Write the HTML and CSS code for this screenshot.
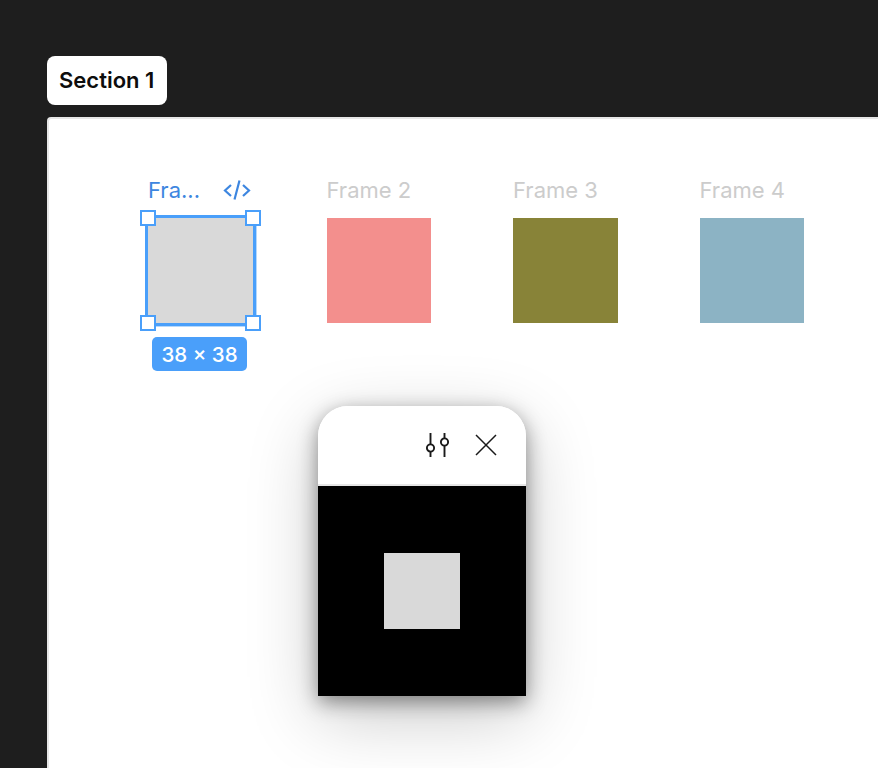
FILE: index.html
```html
<!DOCTYPE html>
<html lang="en">
<head>
    <meta charset="UTF-8">
    <title>Section 1</title>
    <link rel="stylesheet" href="styles.css">
</head>
<body>

    <!-- Section label -->
    <div class="section-label">Section 1</div>

    <!-- Section canvas -->
    <div class="section">
        <div class="frames">
            <div class="frame frame-selected">
                <div class="frame-title">
                    <span>Fra...</span>
                    <svg class="code-icon" width="28" height="22" viewBox="0 0 28 22" fill="none" stroke="#3d86e0" stroke-width="2.200">
                        <path d="M8 6 2 11.500 8 17M20 6l6 5.500-6 5.500M16.500 1.500l-5 19"/>
                    </svg>
                </div>
                <div class="frame-box selected-box">
                    <span class="handle handle-tl"></span>
                    <span class="handle handle-tr"></span>
                    <span class="handle handle-bl"></span>
                    <span class="handle handle-br"></span>
                    <span class="size-badge">38 × 38</span>
                </div>
            </div>
            <div class="frame">
                <div class="frame-title">Frame 2</div>
                <div class="frame-box pink"></div>
            </div>
            <div class="frame">
                <div class="frame-title">Frame 3</div>
                <div class="frame-box olive"></div>
            </div>
            <div class="frame">
                <div class="frame-title">Frame 4</div>
                <div class="frame-box blue"></div>
            </div>
        </div>

        <!-- Preview popup -->
        <div class="preview">
            <div class="preview-header">
                <svg width="26" height="26" viewBox="0 0 26 26" fill="none" stroke="#1a1a1a" stroke-width="1.900">
                    <path d="M6.500 1v11M6.500 20v5M20.500 1v5M20.500 14v11"/>
                    <circle cx="6.500" cy="16" r="3.600"/>
                    <circle cx="20.500" cy="10" r="3.600"/>
                </svg>
                <svg width="22" height="22" viewBox="0 0 22 22" fill="none" stroke="#1a1a1a" stroke-width="1.500">
                    <path d="M1 1l20 20M21 1 1 21"/>
                </svg>
            </div>
            <div class="preview-body">
                <div class="preview-square"></div>
            </div>
        </div>
    </div>

</body>
</html>
```

FILE: styles.css
```css
/* Basic styling */
html, body {
    height: 100%;
}

body {
    margin: 0;
    padding: 56px 0 0 47px;
    box-sizing: border-box;
    overflow: hidden;
    background-color: #1e1e1e;
    font-family: Inter, "Liberation Sans", sans-serif;
}

/* Section label */
.section-label {
    width: 96px;
    height: 49px;
    line-height: 49px;
    padding: 0 12px;
    background-color: white;
    border-radius: 8px;
    color: #0d0d0d;
    font-size: 22px;
    font-weight: 600;
    white-space: nowrap;
}

/* Section canvas */
.section {
    box-sizing: border-box;
    height: 651px;
    margin-top: 12px;
    padding: 58px 0 0 101px;
    background-color: white;
    border-top: 2px solid #e6e6e6;
    border-left: 2px solid #e6e6e6;
    border-top-left-radius: 4px;
}

/* Frames row */
.frames {
    display: flex;
    margin-left: -2px;
}

.frame {
    width: 104.500px;
    margin-right: 82px;
    flex-shrink: 0;
}

.frame-selected {
    margin-right: 74px;
}

.frame-title {
    display: flex;
    justify-content: space-between;
    align-items: center;
    height: 26px;
    margin-bottom: 15px;
    color: #cccccc;
    font-size: 22px;
}

.frame-selected .frame-title {
    color: #3d86e0;
}

.code-icon {
    margin-right: 2px;
}

.frame-box {
    position: relative;
    height: 104.500px;
}

.pink {
    background-color: #f38f8d;
}

.olive {
    background-color: #888338;
}

.blue {
    background-color: #8cb3c4;
}

/* Selected frame */
.selected-box {
    background-color: #d9d9d9;
    box-shadow: 0 0 0 3px #4a9ffa, 1px 1px 0 3px #b5d8fc;
}

.handle {
    position: absolute;
    width: 12px;
    height: 12px;
    background-color: white;
    border: 2px solid #4a9ffa;
}

.handle-tl {
    top: -8px;
    left: -8px;
}

.handle-tr {
    top: -8px;
    right: -8px;
}

.handle-bl {
    bottom: -8px;
    left: -8px;
}

.handle-br {
    bottom: -8px;
    right: -8px;
}

.size-badge {
    position: absolute;
    top: 119px;
    left: 4px;
    width: 95px;
    height: 34px;
    line-height: 35px;
    text-align: center;
    background-color: #4a9ffa;
    border-radius: 5px;
    color: white;
    font-size: 20.500px;
    font-weight: 500;
}

/* Preview popup */
.preview {
    width: 208px;
    margin: 83px 0 0 168px;
    border-radius: 30px 30px 0 0;
    overflow: hidden;
    box-shadow: 0 20px 70px rgba(0, 0, 0, 0.22), 0 6px 20px rgba(0, 0, 0, 0.42);
}

.preview-header {
    display: flex;
    justify-content: flex-end;
    align-items: center;
    gap: 25px;
    height: 78px;
    padding-right: 29px;
    background-color: white;
    border-bottom: 2px solid #e6e6e6;
}

.preview-body {
    display: flex;
    justify-content: center;
    align-items: center;
    height: 210px;
    background-color: black;
}

.preview-square {
    width: 76px;
    height: 76px;
    background-color: #d9d9d9;
}
```
